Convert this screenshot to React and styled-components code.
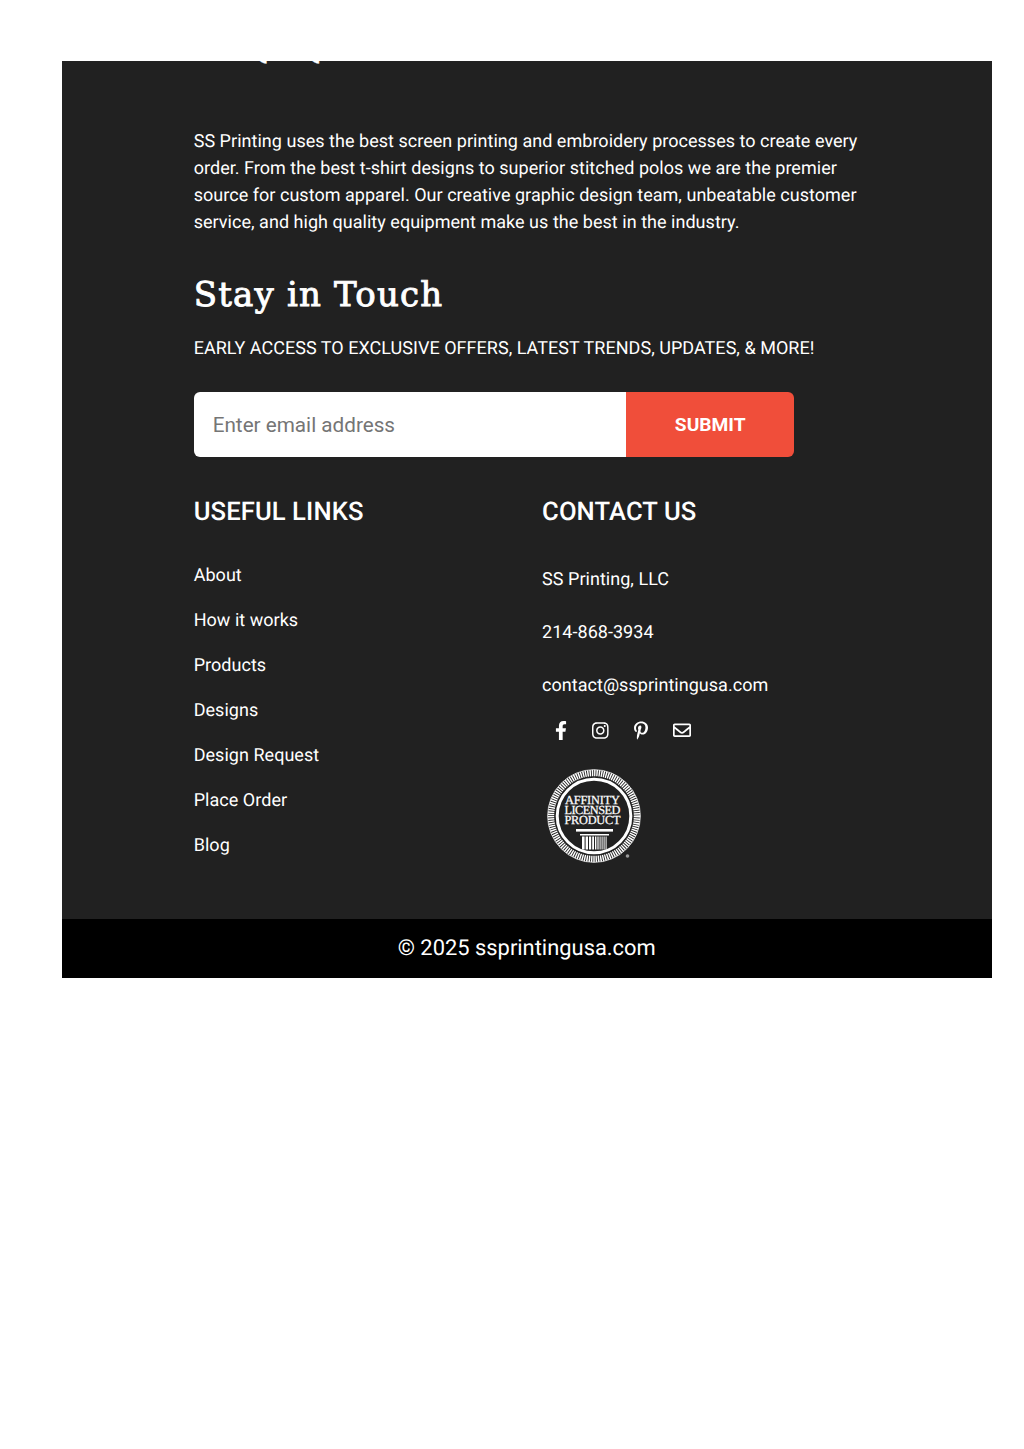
import React from "react";
import styled, { createGlobalStyle } from "styled-components";
import { FaFacebookF, FaInstagram, FaPinterestP, FaRegEnvelope } from "react-icons/fa";

const usefulLinks = ["About", "How it works", "Products", "Designs", "Design Request", "Place Order", "Blog"];

function Seal() {
  return (
    <svg width="96" height="96" viewBox="0 0 96 96" aria-label="Affinity licensed product">
      <circle cx="47" cy="47" r="46.4" fill="none" stroke="#fff" strokeWidth="0.7" />
      <circle cx="47" cy="47" r="43" fill="none" stroke="#fff" strokeWidth="6.4" strokeDasharray="1.45 0.85" />
      <circle cx="47" cy="47" r="36.8" fill="none" stroke="#fff" strokeWidth="3" />
      <SealText x="45.5" y="34.6" textLength="55">AFFINITY</SealText>
      <SealText x="45.5" y="44.6" textLength="56">LICENSED</SealText>
      <SealText x="45.5" y="54.5" textLength="56">PRODUCT</SealText>
      <rect x="29" y="60" width="37" height="2.6" fill="#fff" />
      <rect x="33" y="65" width="29" height="1.5" fill="#fff" />
      <path d="M35 67.5h2.6v13h-2.6zM38.6 67.5h2.4v13h-2.4zM42 67.5h2.2v13H42zM45.2 67.5h1.8v13h-1.8zM48 67.5h1.4v13H48zM50.4 67.5h1.2v13h-1.2zM52.6 67.5h1v13h-1zM54.6 67.5h1v13h-1zM56.6 67.5h1v13h-1zM58.6 67.5h1v13h-1z" fill="#fff" />
      <circle cx="80.5" cy="87" r="1.8" fill="#999" />
    </svg>
  );
}

export default function App() {
  return (
    <>
      <GlobalStyle />
      <Page>
        <Footer>
          <Main>
            <ClippedTitle>A QAQ</ClippedTitle>
            <About>
              SS Printing uses the best screen printing and embroidery processes to create every order. From the best
              t-shirt designs to superior stitched polos we are the premier source for custom apparel. Our creative
              graphic design team, unbeatable customer service, and high quality equipment make us the best in the
              industry.
            </About>
            <SerifTitle>Stay in Touch</SerifTitle>
            <Tagline>EARLY ACCESS TO EXCLUSIVE OFFERS, LATEST TRENDS, UPDATES, &amp; MORE!</Tagline>
            <Signup>
              <EmailInput placeholder="Enter email address" />
              <SubmitButton>SUBMIT</SubmitButton>
            </Signup>
            <Columns>
              <div>
                <ColumnTitle>USEFUL LINKS</ColumnTitle>
                <LinkList>
                  {usefulLinks.map((link) => (
                    <li key={link}>
                      <FooterLink href="#">{link}</FooterLink>
                    </li>
                  ))}
                </LinkList>
              </div>
              <div>
                <ColumnTitle>CONTACT US</ColumnTitle>
                <ContactList>
                  <ContactRow>SS Printing, LLC</ContactRow>
                  <ContactRow>214-868-3934</ContactRow>
                  <ContactRow>contact@ssprintingusa.com</ContactRow>
                </ContactList>
                <Socials>
                  <SocialIcon href="#" $w={12}><FaFacebookF size={19} /></SocialIcon>
                  <SocialIcon href="#" $w={16.6}><FaInstagram size={19} /></SocialIcon>
                  <SocialIcon href="#" $w={14}><FaPinterestP size={19} /></SocialIcon>
                  <SocialIcon href="#" $w={18}><FaRegEnvelope size={18.5} /></SocialIcon>
                </Socials>
                <SealBox>
                  <Seal />
                </SealBox>
              </div>
            </Columns>
          </Main>
          <CopyBar>© 2025 ssprintingusa.com</CopyBar>
        </Footer>
      </Page>
    </>
  );
}

const GlobalStyle = createGlobalStyle`
  html, body {
    margin: 0;
    padding: 0;
    background: #fff;
  }
  body {
    font-family: Roboto, sans-serif;
    text-rendering: geometricPrecision;
    letter-spacing: 0.03px;
  }
`;

const Page = styled.div`
  width: 1024px;
  height: 1449px;
  padding: 61px 32px 0 62px;
  box-sizing: border-box;
  overflow: hidden;
`;

const Footer = styled.footer`
  width: 929.5px;
  background: #212121;
  color: #fff;
  overflow: hidden;
`;

const Main = styled.div`
  padding: 0 131.7px 54px;
`;

const ClippedTitle = styled.h2`
  margin: -36px 0 0;
  padding-left: 15px;
  height: 44px;
  font-family: "DejaVu Serif", serif;
  font-size: 34px;
  font-weight: 400;
  line-height: 44px;
  white-space: nowrap;
  -webkit-text-stroke: 0.3px #fff;
`;

const About = styled.p`
  margin: 59px 0 0;
  width: 670px;
  font-size: 18px;
  line-height: 27px;
  color: #fff;
`;

const SerifTitle = styled.h2`
  margin: 36px 0 0;
  font-family: "DejaVu Serif", serif;
  font-size: 34px;
  font-weight: 400;
  line-height: 46px;
  letter-spacing: 1.2px;
  -webkit-text-stroke: 0.9px #fff;
`;

const Tagline = styled.p`
  margin: 17px 0 0;
  font-size: 18px;
  line-height: 27px;
`;

const Signup = styled.form`
  display: flex;
  width: 600px;
  height: 65px;
  margin-top: 30px;
`;

const EmailInput = styled.input`
  flex: 1;
  min-width: 0;
  border: none;
  outline: none;
  padding: 0 19px;
  border-radius: 6px 0 0 6px;
  background: #fff;
  font-family: Roboto, sans-serif;
  font-size: 20.7px;
  color: #222;

  &::placeholder {
    color: #757575;
    opacity: 1;
  }
`;

const SubmitButton = styled.button`
  width: 168px;
  padding: 0 0 0 1px;
  border: none;
  border-radius: 0 6px 6px 0;
  background: #f04e3a;
  color: #fff;
  font-family: Roboto, sans-serif;
  font-size: 19.2px;
  font-weight: 700;
`;

const Columns = styled.div`
  display: grid;
  grid-template-columns: 348.4px 1fr;
  margin-top: 37px;
`;

const ColumnTitle = styled.h3`
  margin: 0;
  font-size: 25.6px;
  font-weight: 500;
  line-height: 36px;
  letter-spacing: 0.1px;
`;

const LinkList = styled.ul`
  list-style: none;
  margin: 32px 0 0;
  padding: 0;
  display: flex;
  flex-direction: column;
  gap: 18.05px;

  li {
    line-height: 27px;
    height: 27px;
  }
`;

const FooterLink = styled.a`
  color: #fff;
  font-size: 18px;
  text-decoration: none;
`;

const ContactList = styled.div`
  display: flex;
  flex-direction: column;
  gap: 26px;
  margin-top: 36px;
`;

const ContactRow = styled.div`
  font-size: 18px;
  line-height: 27px;
`;

const Socials = styled.div`
  display: flex;
  align-items: center;
  gap: 25px;
  margin-top: 19.4px;
  padding-left: 13px;
`;

const SocialIcon = styled.a`
  width: ${(props) => props.$w}px;
  height: 24px;
  display: flex;
  align-items: center;
  justify-content: center;
  color: #fff;
`;

const SealBox = styled.div`
  display: flex;
  margin: 27px 0 0 5px;
`;

const SealText = styled.text`
  font-family: "Liberation Serif", serif;
  font-size: 12.3px;
  font-weight: 400;
  fill: #fff;
  stroke: #fff;
  stroke-width: 0.25px;
  text-anchor: middle;
`;

const CopyBar = styled.div`
  height: 59px;
  background: #000;
  display: flex;
  align-items: center;
  justify-content: center;
  font-size: 21.9px;
  letter-spacing: 0;
`;
